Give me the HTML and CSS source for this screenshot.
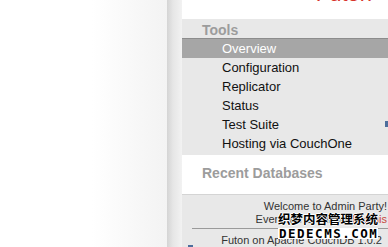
FILE: index.html
```html
<!DOCTYPE html>
<html lang="en">
<head>
    <meta charset="UTF-8">
    <title>Futon</title>
    <link rel="stylesheet" href="styles.css">
</head>
<body>
    <div class="main"></div>
    <div class="shade"></div>
    <div class="sidebar">
        <div class="logo"><span>Futon</span></div>
        <h3 class="nav-title">Tools</h3>
        <ul class="nav">
            <li class="selected">Overview</li>
            <li>Configuration</li>
            <li>Replicator</li>
            <li>Status</li>
            <li>Test Suite</li>
            <li>Hosting via CouchOne</li>
        </ul>
        <h3 class="recent">Recent Databases</h3>
        <div class="footer">
            <p class="userctx">Welcome to Admin Party!<br>Everyone is admin. <a href="#">Fix this</a></p>
            <p class="version">Futon on Apache CouchDB 1.0.2</p>
        </div>
        <span class="mark mark-right"></span>
        <span class="mark mark-left"></span>
        <div class="watermark">
            <div class="wm-cn">织梦内容管理系统</div>
            <div class="wm-en">DEDECMS.COM</div>
        </div>
    </div>
</body>
</html>
```

FILE: styles.css
```css
body {
    margin: 0;
    height: 247px;
    display: flex;
    overflow: hidden;
    font-family: "Liberation Sans", Arial, sans-serif;
    background-color: #fff;
}
.main {
    width: 167px;
    background: linear-gradient(to right, #fff 55%, #f3f3f3);
}
.shade {
    width: 15px;
    background: linear-gradient(to right, #d4d4d4, #e6e6e6 40%, #f2f2f2);
}
.sidebar {
    flex: 1;
    position: relative;
    display: flex;
    flex-direction: column;
    background-color: #e8e8e8;
}
.logo {
    height: 19px;
    background-color: #fff;
    overflow: hidden;
    text-align: right;
    padding-right: 16px;
}
.logo span {
    display: block;
    margin-top: -17px;
    font-size: 22px;
    line-height: 22px;
    color: #d8342c;
}
.nav-title {
    margin: 0;
    height: 19px;
    padding-left: 20px;
    font-size: 14px;
    line-height: 22px;
    color: #9c9c9c;
    border-bottom: 1px solid #8c8c8c;
}
.nav {
    list-style: none;
    margin: 0;
    padding: 0 0 2px;
}
.nav li {
    height: 19px;
    line-height: 19px;
    padding-left: 40px;
    font-size: 13px;
    color: #111;
}
.nav li.selected {
    background-color: #a6a6a6;
    color: #fff;
}
.recent {
    margin: 0;
    height: 39px;
    padding-left: 20px;
    background-color: #fff;
    font-size: 14px;
    line-height: 36px;
    color: #9c9c9c;
    border-bottom: 1px solid #d4d4d4;
}
.footer {
    flex: 1;
    font-size: 11px;
    color: #333;
    text-align: right;
}
.footer p {
    margin: 0;
}
.userctx {
    padding: 5px 1px 0 0;
    line-height: 12.5px;
    height: 28px;
    margin-left: 10px !important;
    border-bottom: 1px solid #9a9a9a;
}
.userctx a {
    color: #c9473e;
    text-decoration: none;
}
.version {
    padding: 5px 6px 0 0;
    line-height: 12px;
}
.mark {
    position: absolute;
    background-color: #4d6e9c;
}
.mark-right {
    right: 0;
    top: 121px;
    width: 3px;
    height: 6px;
}
.mark-left {
    left: 6px;
    bottom: 0;
    width: 5px;
    height: 2px;
}
.watermark {
    position: absolute;
    left: 96px;
    top: 210px;
    width: 100px;
    text-align: center;
    color: #000;
    font-weight: bold;
}
.wm-cn {
    font-family: "Noto Sans CJK SC", sans-serif;
    font-size: 12.5px;
    line-height: 17px;
    text-shadow: 1px 0 0 #fff, -1px 0 0 #fff, 0 1px 0 #fff, 0 -1px 0 #fff;
}
.wm-en {
    font-family: "DejaVu Sans Mono", monospace;
    font-size: 12.5px;
    line-height: 11px;
    letter-spacing: 1.5px;
    white-space: nowrap;
    background-color: #fff;
    margin-top: 1px;
    padding-left: 1px;
}
```
